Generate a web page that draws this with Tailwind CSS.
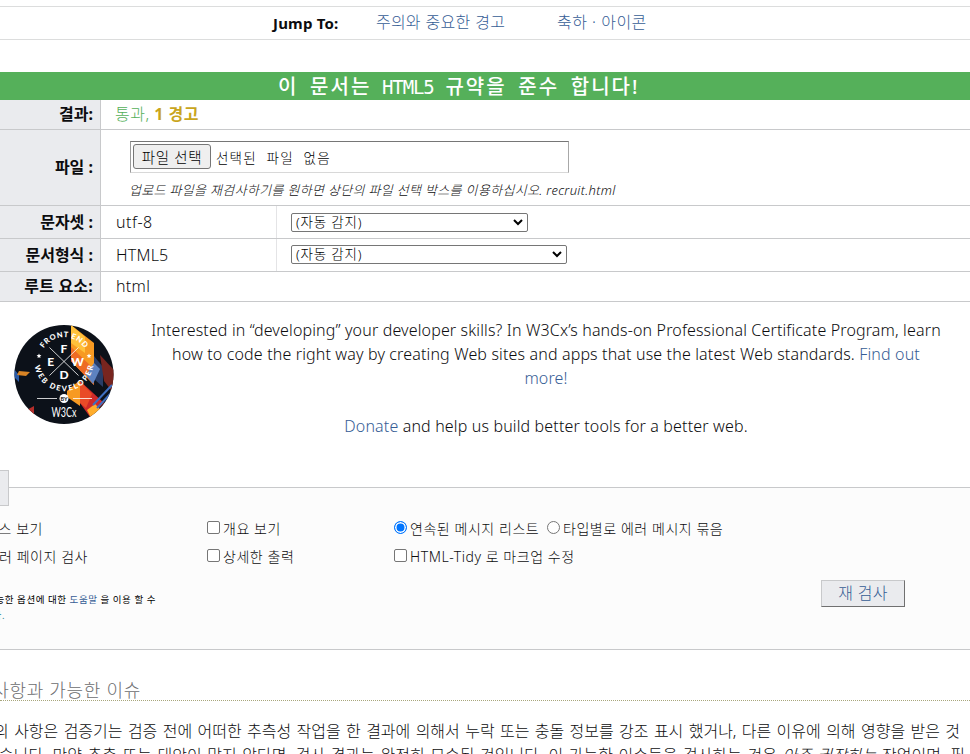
<!DOCTYPE html>
<html lang="ko">
<head>
<meta charset="utf-8">
<title>Markup Validation</title>
<script src="https://cdn.jsdelivr.net/npm/@tailwindcss/browser@4"></script>
</head>
<body class="w-[970px] h-[754px] overflow-hidden bg-white text-[#0c0c0e] font-light whitespace-nowrap font-['Noto_Sans','Noto_Sans_CJK_KR',sans-serif] text-[16px]">
<nav class="mt-[6px] h-[34px] border-y border-[#dcdddd] flex items-center pl-[273px] leading-[32px]">
  <strong class="w-[103px] font-bold text-[15px] tracking-[0.2px] -mt-px">Jump To:</strong>
  <a class="w-[181px] text-[#365d95] tracking-[0.2px] [word-spacing:0.5px] -mt-[2px]">주의와 중요한 경고</a>
  <a class="text-[#365d95] tracking-[0.5px] -mt-[2px]">축하 · 아이콘</a>
</nav>
<h2 class="mt-8 h-7 bg-[#55b05a] text-white font-medium text-[20px] leading-[29px] pl-[278px] tracking-[2px] [word-spacing:4.5px]">이 문서는 <span class="font-['DejaVu_Sans_Mono'] text-[19px] font-normal tracking-[-1.1px] -ml-px">HTML5</span> 규약을 준수 합니다!</h2>

<section class="grid grid-cols-[101px_1fr]">
  <div class="h-[30px] bg-[#eaebee] border-b border-r border-[#c8c9cb] text-right pr-[7px] font-bold leading-[29px]">결과:</div>
  <div class="border-b border-[#c8c9cb] pl-[14px] leading-[29px] text-[#55b05a] tracking-[0.5px]">통과, <b class="font-bold text-[#c9a51d]">1 경고</b></div>

  <div class="h-[76px] bg-[#eaebee] border-b border-r border-[#c8c9cb] text-right pr-[7px] font-bold leading-[75px]">파일 :</div>
  <div class="h-[76px] border-b border-[#c8c9cb] pl-[29px] pt-[11px]">
    <div class="w-[439px] h-8 border border-t-[#767676] border-l-[#9a9a9a] border-r-[#a8a8a8] border-b-[#d8d8d8] flex items-start pt-[2px] pl-[2px] text-black font-normal text-[14px]">
      <span class="w-[78px] h-[25px] border border-[#767676] rounded-[3px] bg-[#efefef] text-center leading-[24px] text-[14.5px] tracking-[0.7px] font-light">파일 선택</span>
      <span class="pl-[5px] leading-[28px] font-light text-[13.5px] tracking-[1.2px] [word-spacing:5px]">선택된 파일 없음</span>
    </div>
    <p class="h-[32px] italic text-[13px] leading-[34px] tracking-[0.32px] -ml-px">업로드 파일을 재검사하기를 원하면 상단의 파일 선택 박스를 이용하십시오. recruit.html</p>
  </div>

  <div class="h-[33px] bg-[#eaebee] border-b border-r border-[#c8c9cb] text-right pr-[7px] font-bold leading-[32px]">문자셋 :</div>
  <div class="border-b border-[#c8c9cb] pl-[14px] leading-[32px] flex">
    <span class="w-[162px] pl-px border-r border-[#e4e4e6] tracking-[0.5px]">utf-8</span>
    <div class="ml-[14px] mt-[7px] w-[237px] h-[19px] border border-[#767676] rounded-[2px] flex items-center justify-between pl-1 pr-[4px] text-black text-[13.5px] leading-[17px] tracking-[0.8px]">(자동 감지)<svg class="w-[10px] h-[7px]" viewBox="0 0 10 7" fill="none" stroke="#000" stroke-width="2"><path d="M1 1l4 4 4-4"/></svg></div>
  </div>

  <div class="h-[33px] bg-[#eaebee] border-b border-r border-[#c8c9cb] text-right pr-[7px] font-bold leading-[32px]">문서형식 :</div>
  <div class="border-b border-[#c8c9cb] pl-[14px] leading-[32px] flex">
    <span class="w-[162px] pl-px border-r border-[#e4e4e6] tracking-[0.2px]">HTML5</span>
    <div class="ml-[14px] mt-[6px] w-[276px] h-[19px] border border-[#767676] rounded-[2px] flex items-center justify-between pl-1 pr-[4px] text-black text-[13.5px] leading-[17px] tracking-[0.8px]">(자동 감지)<svg class="w-[10px] h-[7px]" viewBox="0 0 10 7" fill="none" stroke="#000" stroke-width="2"><path d="M1 1l4 4 4-4"/></svg></div>
  </div>

  <div class="h-[30px] bg-[#eaebee] border-b border-r border-[#c8c9cb] text-right pr-[7px] font-bold leading-[28px] tracking-[0.2px]">루트 요소:</div>
  <div class="border-b border-[#c8c9cb] pl-[15px] leading-[29px] tracking-[0.3px]">html</div>
</section>

<section class="h-[168px] flex">
  <svg class="mt-[23px] ml-[14px] w-[100px] h-[100px] shrink-0" viewBox="0 0 100 100" font-family="Lato, sans-serif" font-weight="700" fill="#fff" text-anchor="middle">
    <defs>
      <clipPath id="disc"><circle cx="50" cy="49.500" r="49.500"/></clipPath>
      <path id="arcTop" d="M25.500 36.700a24.500 24.500 0 0 1 49 0"/>
      <path id="arcBottom" d="M20.500 36.700a29.500 29.500 0 0 0 59 0"/>
    </defs>
    <g clip-path="url(#disc)">
      <path fill="#0c1119" d="M0 0h100v100H0z"/>
      <path fill="#f79a22" d="M57 0l23 18v42L57 36z"/>
      <path fill="#ffc13b" d="M57 0l14 12v16L57 18z"/>
      <path fill="#ee6b24" d="M57 22l23 22v16L57 36z"/>
      <path fill="#283d68" d="M80 31l9 11v20l-9-8z"/>
      <path fill="#5d82c0" d="M72 50l8-12 6 6-7 15z"/>
      <path fill="#78251f" d="M86 30l14 15v24L90 56z"/>
      <path fill="#f79a22" d="M53 66l13-11v26l-13-9z"/>
      <path fill="#cf2a29" d="M66 56l24 22-14 14-10-14z"/>
      <path fill="#e94b28" d="M66 56l12 13-6 14-6-5z"/>
      <path fill="#ffad2c" d="M73 85l8-6 6 6-9 10z"/>
      <path stroke="#3f6fc0" stroke-width="2" d="M79 80l19-20M83 83l15-16"/>
      <path fill="#2a5ba8" d="M0 44l5 6v7l-5-5z"/>
      <path fill="#d88425" d="M5 46l11 1-4 4-9-1z"/>
      <path fill="#b52e2b" d="M11 86l9-5v9z"/>
    </g>
    <path stroke="#fff" stroke-width=".8" d="M35.500 22.500l29 28M64.500 22.500l-29 28M23 73.500h20M59 73.500h19"/>
    <g font-size="12" font-weight="900"><text x="50" y="28">F</text><text x="36.700" y="40.500">E</text><text x="63.500" y="40.500">W</text><text x="50" y="53.500">D</text></g>
    <g font-size="7.500" font-weight="900">
      <text textLength="48"><textPath href="#arcTop" startOffset="50%" textLength="48">FRONT END</textPath></text>
      <text textLength="84"><textPath href="#arcBottom" startOffset="50%" textLength="84">WEB DEVELOPER</textPath></text>
    </g>
    <path d="M25 28.500l.7 1.600 1.700.1-1.300 1.200.4 1.700-1.500-.9-1.500.9.4-1.700-1.300-1.200 1.700-.1zM75 28.500l.7 1.600 1.700.1-1.300 1.200.4 1.700-1.500-.9-1.500.9.4-1.700-1.300-1.200 1.700-.1z"/>
    <circle cx="50" cy="73.500" r="4.500"/>
    <text x="50" y="75.500" font-size="5.500" fill="#111">BY</text>
    <text x="50" y="91.500" font-size="13.500" font-weight="400" textLength="25" lengthAdjust="spacingAndGlyphs">W3Cx</text>
  </svg>
  <div class="ml-[32px] w-[800px] pt-[16px] text-center leading-6 tracking-[0.15px]">
    <p>Interested in “developing” your developer skills? In W3Cx’s hands-on Professional Certificate Program, learn<br>how to code the right way by creating Web sites and apps that use the latest Web standards. <a class="text-[#365d95]">Find out</a><br><a class="text-[#365d95]">more!</a></p>
    <p class="mt-6"><a class="text-[#365d95]">Donate</a> and help us build better tools for a better web.</p>
  </div>
</section>

<section class="flex h-[180px]">
  <div class="w-[9px] h-9 bg-[#eaebee] border border-l-0 border-[#c8c9cb] z-10"></div>
  <div class="-ml-[9px] mt-[17px] w-[970px] h-[163px] border-y border-[#c8c9cb] bg-[#fcfcfc]">
    <div class="grid grid-cols-[207px_187px_1fr] text-[14px] pt-[27px] leading-[28px] tracking-[0.55px]">
      <span class="w-[43px] flex justify-end">소스 보기</span>
      <label class="flex"><i class="w-[13px] h-[13px] mt-[6px] mr-[3px] border border-[#767676] rounded-[2px] bg-white"></i>개요 보기</label>
      <div class="flex">
        <label class="flex w-[153px]"><i class="w-[13px] h-[13px] mt-[6px] mr-[3px] border border-[#0075ff] rounded-full bg-[#0075ff] shadow-[inset_0_0_0_1.5px_white]"></i>연속된 메시지 리스트</label>
        <label class="flex"><i class="w-[13px] h-[13px] mt-[6px] mr-[3px] border border-[#767676] rounded-full bg-white"></i>타입별로 에러 메시지 묶음</label>
      </div>
      <span class="w-[88px] flex justify-end">에러 페이지 검사</span>
      <label class="flex"><i class="w-[13px] h-[13px] mt-[6px] mr-[3px] border border-[#767676] rounded-[2px] bg-white"></i>상세한 출력</label>
      <label class="flex"><i class="w-[13px] h-[13px] mt-[6px] mr-[3px] border border-[#767676] rounded-[2px] bg-white"></i>HTML-Tidy 로 마크업 수정</label>
    </div>
    <div class="flex justify-between pr-[65px] pt-[9px]">
      <div class="text-[9.5px] leading-[16px] pt-[12px] text-black font-normal tracking-[0.55px]">
        <p class="w-[156px] flex justify-end"><span>가능한 옵션에 대한 <a class="text-[#365d95]">도움말</a> 을 이용 할 수</span></p>
        <p class="w-[5px] flex justify-end text-[#287f96]">있습니다.</p>
      </div>
      <span class="w-[84px] h-[27px] border border-[#c8c9cb] border-r-[#707070] border-b-[#707070] bg-[#eaebee] text-[#365d95] text-center leading-[25px] tracking-[0.3px]">재 검사</span>
    </div>
  </div>
</section>

<h3 class="mt-[29px] h-[22px] border-b border-dotted border-[#a8a67c] text-[#6c6d70] text-[18px] leading-[22px] tracking-[0.7px]"><span class="w-[141px] flex justify-end">주의 사항과 가능한 이슈</span></h3>
<div class="mt-[18px] leading-6 [word-spacing:1.2px]">
  <p class="w-[960px] flex justify-end"><span>의 사항은 검증기는 검증 전에 어떠한 추측성 작업을 한 결과에 의해서 누락 또는 충돌 정보를 강조 표시 했거나, 다른 이유에 의해 영향을 받은 것</span></p>
  <p class="w-[965px] flex justify-end tracking-[0.06px]"><span>있습니다. 만약 추측 또는 대안이 맞지 않다면, 검사 결과는 완전히 모순된 것입니다. 이 가능한 이슈들을 검사하는 것은 <em>아주 권장하는</em> 작업이며, 필</span></p>
</div>
</body>
</html>
